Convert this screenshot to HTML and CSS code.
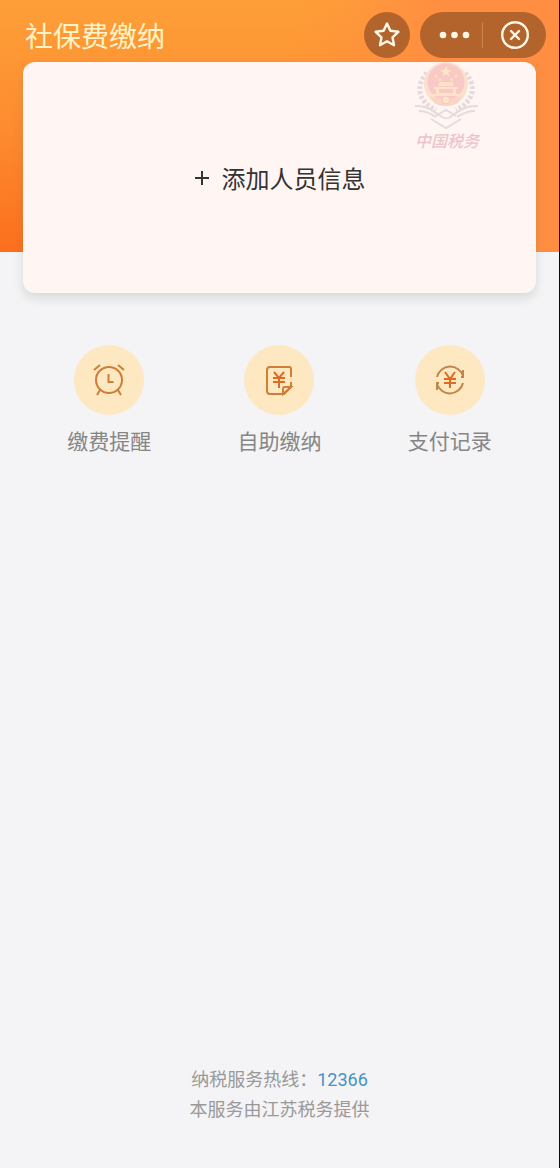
FILE: index.html
```
<!DOCTYPE html>
<html lang="zh-CN">
<head>
<meta charset="UTF-8">
<meta name="viewport" content="width=device-width, initial-scale=1">
<title>社保费缴纳</title>
<link rel="stylesheet" href="styles.css">
</head>
<body>
<div class="page">

<header class="topbar">
    <h1 class="title">社保费缴纳</h1>
    <button type="button" class="star-btn" aria-label="收藏">
        <svg width="28" height="28" viewBox="0 0 28 28"><path d="M14 2.5l3.4 7.3 8 1-5.9 5.5 1.5 7.9-7-3.900-7 3.900 1.500-7.900-5.900-5.500 8-1z" fill="none" stroke="#fff8e6" stroke-width="2.4" stroke-linejoin="round"/></svg>
    </button>
    <div class="capsule">
        <button type="button" class="capsule-btn" aria-label="更多">
            <svg width="32" height="8" viewBox="0 0 32 8" fill="#fff8e6"><circle cx="5" cy="4" r="3.3"/><circle cx="16.500" cy="4" r="3.3"/><circle cx="28" cy="4" r="3.3"/></svg>
        </button>
        <button type="button" class="capsule-btn capsule-close" aria-label="关闭">
            <svg width="30" height="30" viewBox="0 0 30 30" fill="none" stroke="#fff8e6" stroke-width="2.4" stroke-linecap="round"><circle cx="15" cy="15" r="12.800"/><path d="M11 11l8 8M19 11l-8 8"/></svg>
        </button>
    </div>
</header>

<main>
    <section class="card">
        <button type="button" class="add-btn">
            <svg width="16" height="16" viewBox="0 0 16 16"><path d="M8 1v14M1 8h14" stroke="#333" stroke-width="2"/></svg>
            添加人员信息
        </button>
        <div class="emblem">
            <svg width="66" height="68" viewBox="0 0 66 68">
                <!-- wheat ears -->
                <g fill="none" stroke="#e6dbdc" stroke-width="5" stroke-dasharray="3 2">
                    <path d="M13 11C1 23 4 40 22 48"/>
                    <path d="M51 11C63 23 60 40 42 48"/>
                </g>
                <!-- ribbons -->
                <g fill="none" stroke="#e5dadc" stroke-width="2">
                    <path d="M1 44c10-1 17 4 24 9 5 4 9 5 14 0 7-5 14-10 25-9"/>
                    <path d="M5 49c8 0 12 3 17 6M61 49c-9 0-13 3-18 6"/>
                    <path d="M17 57l15 9 15-9M22 54l10-6 10 6"/>
                </g>
                <!-- national emblem -->
                <circle cx="32" cy="22" r="22" fill="#fbdfcf"/>
                <circle cx="32" cy="20" r="18.500" fill="#f8c9c5"/>
                <path d="M32 4l1.600 4h4l-3.200 2.500 1.200 4L32 12l-3.600 2.500 1.200-4L26.400 8h4z" fill="#fde6c6"/>
                <g fill="#fce0c0"><circle cx="22" cy="14" r="1.500"/><circle cx="26" cy="17.500" r="1.500"/><circle cx="38" cy="17.500" r="1.500"/><circle cx="42" cy="14" r="1.500"/></g>
                <path d="M26 20h12l2 4H24zM20 25h24v2H20zM22 27h3v4h14v-4h3v5H22zM17 32h30v2H17z" fill="#fce3c9"/>
                <path d="M16 34c8 4 24 4 32 0l-4 7c-7 4-17 4-24 0z" fill="#fad5c6"/>
                <circle cx="32" cy="38" r="4" fill="#fce3c9" stroke="#f5c9bd"/>
            </svg>
            <span class="emblem-name">中国税务</span>
        </div>
    </section>

    <nav class="menu">
        <a href="#" class="menu-item">
            <span class="menu-icon">
                <svg width="34" height="34" viewBox="0 0 34 34" fill="none" stroke="#d07d35" stroke-width="2"><circle cx="17" cy="17" r="13"/><path d="M16.500 11v8h5"/><path d="M2 7l6-5M26 2l6 5M8 27l-3 5M26 27l3 5"/></svg>
            </span>
            <span class="menu-text">缴费提醒</span>
        </a>
        <a href="#" class="menu-item">
            <span class="menu-icon">
                <svg width="34" height="34" viewBox="0 0 34 34" fill="none" stroke="#d07d35" stroke-width="2"><path d="M29 14V6q0-2-2-2H8Q5 4 5 7v21q0 3 3 3h14l7-7v-5"/><path d="M21 31v-5q0-2 2-2h6z"/><path d="M12 9l5 6 5-6M11 15h12M11 19h12M17 15v10" stroke="#df6b22"/></svg>
            </span>
            <span class="menu-text">自助缴纳</span>
        </a>
        <a href="#" class="menu-item">
            <span class="menu-icon">
                <svg width="34" height="34" viewBox="0 0 34 34" fill="none" stroke="#c08548" stroke-width="2"><path d="M4 14a13.500 13.500 0 0 1 26-1M30 20a13.500 13.500 0 0 1-26 1"/><path d="M30 7v7h-2M4 27v-7h2"/><path d="M12 9l5 7 5-7M11 16h12M11 20h12M17 16v9" stroke="#df6b22"/></svg>
            </span>
            <span class="menu-text">支付记录</span>
        </a>
    </nav>
</main>

<footer class="footer">
    <p>纳税服务热线：<a href="tel:12366">12366</a></p>
    <p>本服务由江苏税务提供</p>
</footer>

</div>
</body>
</html>
```
FILE: styles.css
```
* {
    box-sizing: border-box;
}

body {
    margin: 0;
    background: #f4f3f5;
    font-family: "Noto Sans CJK SC", sans-serif;
}

h1, p {
    margin: 0;
}

a {
    text-decoration: none;
}

button {
    padding: 0;
    border: 0;
    background: none;
    color: inherit;
    font-family: inherit;
    cursor: pointer;
}

svg {
    display: block;
    flex: none;
}

.page {
    display: flex;
    flex-direction: column;
    min-height: 100vh;
    border-right: 1px solid #16060c;
    background-image: linear-gradient(100deg, rgba(255, 142, 66, 0) 50%, #ff8e42 75%), linear-gradient(#fe9f38, #fd8c30 50%, #fb6f1d);
    background-size: 100% 252px;
    background-repeat: no-repeat;
}

/* top bar */
.topbar {
    display: flex;
    align-items: center;
    padding: 12px 13px 4px 25px;
}

.title {
    flex: 1;
    color: #fff3c8;
    font-size: 28px;
    font-weight: 400;
    line-height: 44px;
}

.star-btn {
    display: flex;
    align-items: center;
    justify-content: center;
    width: 46px;
    height: 46px;
    margin-right: 10px;
    border-radius: 50%;
    background: #b3642c;
}

.capsule {
    display: flex;
    align-items: center;
    height: 46px;
    padding-left: 6px;
    border-radius: 23px;
    background: #b3642c;
}

.capsule-btn {
    display: flex;
    align-items: center;
    justify-content: center;
    width: 56px;
    height: 26px;
}

.capsule-close {
    width: 64px;
    border-left: 1px solid #cb844e;
}

/* person card */
.card {
    position: relative;
    display: flex;
    min-height: 231px;
    margin: 0 23px;
    border-radius: 12px;
    background: #fff5f3;
    box-shadow: 0 5px 10px rgba(90, 110, 100, 0.18);
}

.add-btn {
    display: flex;
    flex: 1;
    align-items: center;
    justify-content: center;
    gap: 12px;
    color: #333;
    font-size: 24px;
}

.emblem {
    position: absolute;
    top: 0;
    right: 56px;
    display: flex;
    flex-direction: column;
    align-items: center;
}

.emblem-name {
    color: #ecc4c8;
    font-size: 16px;
    font-style: italic;
    font-weight: 500;
    line-height: 20px;
}

/* menu */
.menu {
    display: grid;
    grid-template-columns: repeat(3, 1fr);
    margin: 52px 24px 0;
}

.menu-item {
    display: flex;
    flex-direction: column;
    align-items: center;
    gap: 10px;
    color: #868686;
}

.menu-icon {
    display: flex;
    align-items: center;
    justify-content: center;
    width: 70px;
    height: 70px;
    border-radius: 50%;
    background: #fee8c2;
}

.menu-text {
    font-size: 21px;
    line-height: 30px;
}

/* footer */
.footer {
    margin-top: auto;
    padding: 40px 0 45px;
    color: #999;
    font-size: 18px;
    line-height: 29px;
    text-align: center;
}

.footer a {
    color: #4393c9;
    font-family: Roboto, sans-serif;
}
```
